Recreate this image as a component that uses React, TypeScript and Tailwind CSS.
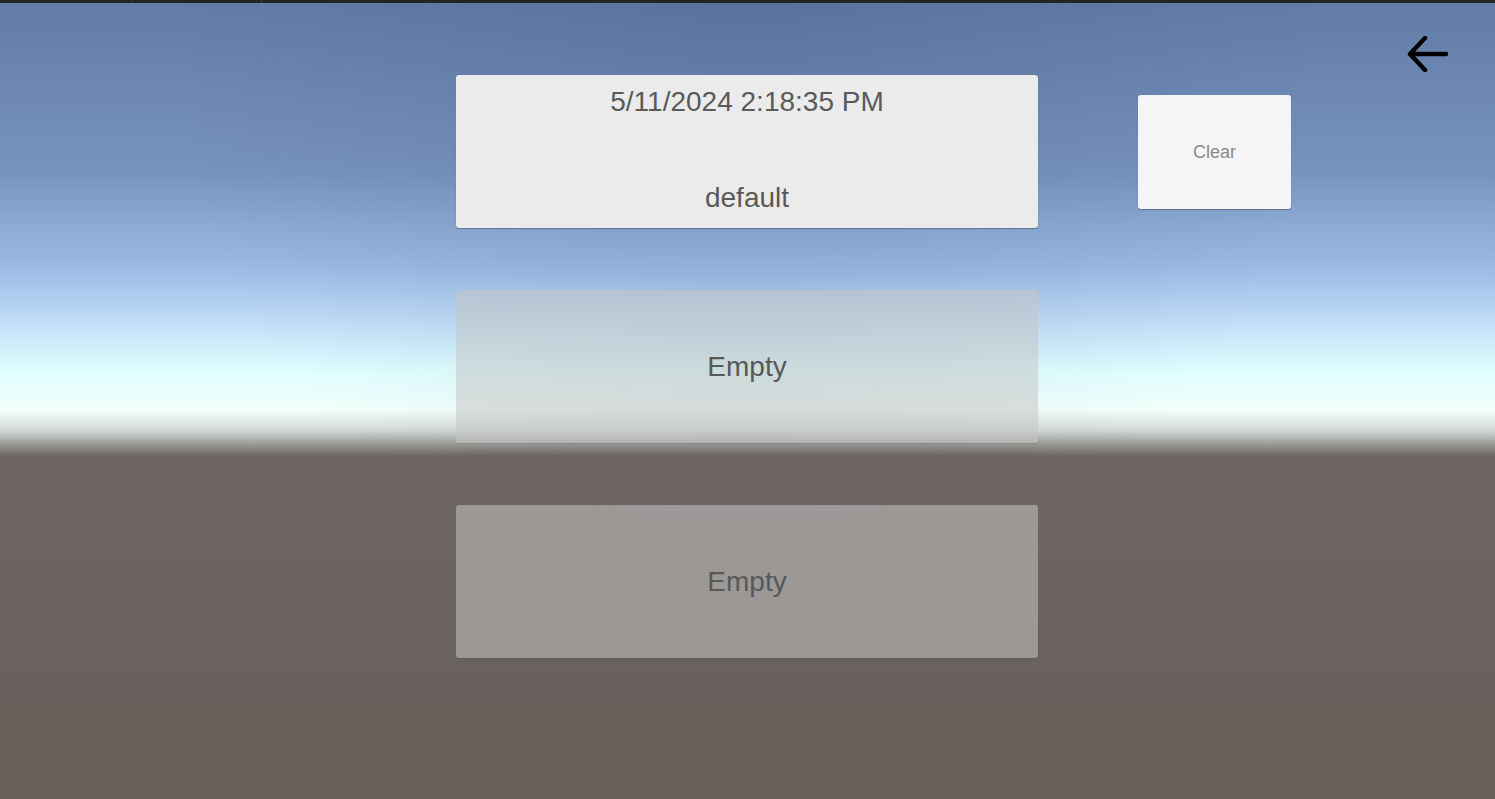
import React from 'react';

const sky =
  'bg-[radial-gradient(ellipse_at_50%_0%,rgba(30,45,80,0.13),rgba(30,45,80,0)_55%),linear-gradient(to_bottom,#617ca6_0px,#7593be_170px,#9cbce5_270px,#c5e3fb_330px,#dffffd_372px,#f3fffc_410px,#d3dbd7_430px,#9c9a97_444px,#6d6663_456px,#6a625e_620px,#675f59_799px)]';

const BackArrow: React.FC = () => (
  <svg width="42" height="36" viewBox="0 0 42 36" fill="none" className="block">
    <path
      d="M39 18 H3 M18 2 L3 18 L18 34"
      stroke="#000"
      strokeWidth="4.5"
      strokeLinecap="round"
      strokeLinejoin="round"
    />
  </svg>
);

const SaveSlot: React.FC<{ date: string; name: string }> = ({ date, name }) => (
  <button className="h-[153px] w-full rounded-[3px] bg-[#ebebeb] shadow-[0_1px_1px_rgba(0,0,0,0.3)] flex flex-col justify-between items-center pt-[11px] pb-[14px] text-[28px] leading-[32px] text-[#5a5a5a]">
    <span>{date}</span>
    <span>{name}</span>
  </button>
);

const EmptySlot: React.FC = () => (
  <button className="h-[153px] w-full rounded-[3px] bg-[#c6c6c6]/[0.54] shadow-[0_1px_1px_rgba(0,0,0,0.1)] flex items-center justify-center text-[28px] leading-[32px] text-[#585858]">
    Empty
  </button>
);

const App: React.FC = () => {
  return (
    <div className={`h-screen w-full overflow-hidden flex flex-col font-['Liberation_Sans',Arial,sans-serif] ${sky}`}>
      <div className="h-[3px] flex bg-[#242424]">
        <div className="w-[133px] border-r border-[#3a3a3a]" />
        <div className="w-[129px] border-r border-[#3a3a3a]" />
        <div className="flex-1" />
      </div>

      <div className="flex-1 grid grid-cols-[456px_582px_1fr]">
        <div />

        <div className="flex flex-col gap-[62px] pt-[72px]">
          <SaveSlot date="5/11/2024 2:18:35 PM" name="default" />
          <EmptySlot />
          <EmptySlot />
        </div>

        <div className="flex justify-between items-start">
          <button className="ml-[100px] mt-[92px] w-[153px] h-[114px] rounded-[3px] bg-[#f5f5f5] shadow-[0_1px_1px_rgba(0,0,0,0.3)] text-[18px] text-[#8a8a8a] flex items-center justify-center">
            Clear
          </button>
          <button className="mt-[33px] mr-[46px]">
            <BackArrow />
          </button>
        </div>
      </div>
    </div>
  );
};

export default App;
